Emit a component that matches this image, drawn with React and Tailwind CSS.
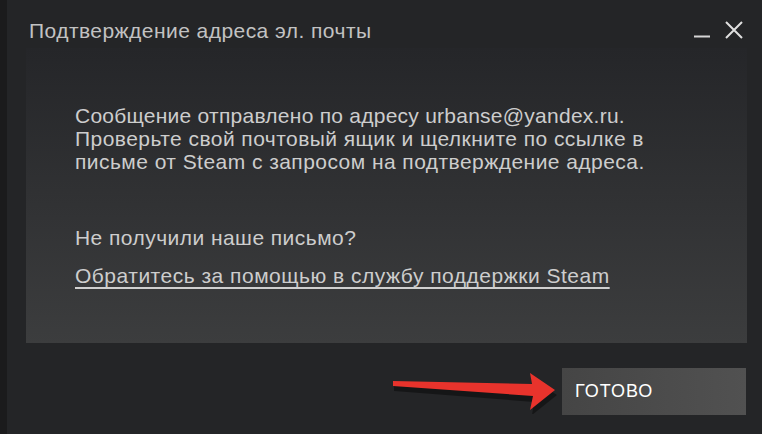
export default function App() {
  return (
    <div
      className="relative h-[434px] w-[762px] overflow-hidden bg-[#242527] text-[#cdcdcd]"
      style={{ fontFamily: '"Liberation Sans", Arial, sans-serif' }}
    >
      <div className="absolute inset-y-0 left-0 w-[7px] bg-[#1b1b1c]" />
      <div className="flex h-[48px] items-start justify-between pl-[29px] pr-[18px] pt-[19px]">
        <div className="text-[21px] leading-[24px] tracking-[0.45px] text-[#c2c2c2]">Подтверждение адреса эл. почты</div>
        <div className="flex items-center gap-[13px] pt-[1px]">
          <svg width="18" height="20" viewBox="0 0 18 20">
            <path d="M1 16.5h16" stroke="#d6d6d6" strokeWidth="2" />
          </svg>
          <svg width="20" height="20" viewBox="0 0 20 20">
            <path d="M2 2l16 16M18 2L2 18" stroke="#e0e0e0" strokeWidth="2" />
          </svg>
        </div>
      </div>
      <div className="ml-[26px] mr-[15px] h-[295px] bg-gradient-to-b from-[#252629] to-[#3c3d3e] pl-[49px] pt-[56px]">
        <p className="text-[21px] leading-[23px] tracking-[0.45px]">
          <span className="tracking-[0.25px]">Сообщение отправлено по адресу urbanse@yandex.ru.</span>
          <br />
          Проверьте свой почтовый ящик и щелкните по ссылке в
          <br />
          письме от Steam с запросом на подтверждение адреса.
        </p>
        <p className="mt-[53px] text-[21px] leading-[23px] tracking-[0.45px]">Не получили наше письмо?</p>
        <p className="mt-[15px] text-[21px] leading-[23px] tracking-[0.5px] underline decoration-[#d0d0d0] underline-offset-[4px]">
          Обратитесь за помощью в службу поддержки Steam
        </p>
      </div>
      <div className="flex items-center justify-end pr-[16px] pt-[25px]">
        <svg width="172" height="44" viewBox="0 0 172 44">
          <path d="M3 14 L142 18 L140 6 L166 23 L141 43 L143 30 L3 19 Z" fill="#000" opacity="0.4" transform="translate(1 2)" />
          <path d="M3 11 L142 14 L140 3 L165 20 L140 40 L143 26 L3 16 Z" fill="#e8332c" />
        </svg>
        <button className="h-[47px] w-[184px] bg-gradient-to-r from-[#454545] to-[#515151] pl-[13px] text-left text-[18px] tracking-[1px] text-white">
          ГОТОВО
        </button>
      </div>
    </div>
  )
}
